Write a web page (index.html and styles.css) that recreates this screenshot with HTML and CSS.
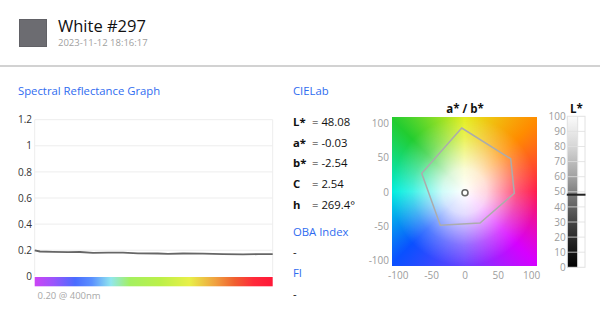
FILE: index.html
```html
<!DOCTYPE html>
<html>

<head>
  <link rel="stylesheet" href="styles.css">
</head>

<body>
  <header class="sample-header">
    <div class="swatch"></div>
    <div class="sample-info">
      <div class="sample-name">White #297</div>
      <div class="sample-date">2023-11-12 18:16:17</div>
    </div>
  </header>

  <main class="measurement">
    <!-- Spectral curve -->
    <section class="graph-col">
      <h2 class="section-title">Spectral Reflectance Graph</h2>
      <svg class="reflectance-graph" width="257" height="200" viewBox="0 0 257 200">
        <defs>
          <linearGradient id="spectrum" x1="0" y1="0" x2="1" y2="0">
            <stop offset="0%" stop-color="#cc44f5" />
            <stop offset="8%" stop-color="#9a55fc" />
            <stop offset="17%" stop-color="#4a6cff" />
            <stop offset="24%" stop-color="#5a90ff" />
            <stop offset="32%" stop-color="#90e6ee" />
            <stop offset="40%" stop-color="#a4f060" />
            <stop offset="53%" stop-color="#bcf048" />
            <stop offset="65%" stop-color="#e8f048" />
            <stop offset="76%" stop-color="#f0a040" />
            <stop offset="84%" stop-color="#f06030" />
            <stop offset="92%" stop-color="#ff2a3a" />
            <stop offset="100%" stop-color="#ff1838" />
          </linearGradient>
        </defs>
        <g class="grid">
          <line x1="16.7" y1="12.7" x2="254.7" y2="12.7" />
          <line x1="16.7" y1="38.8" x2="254.7" y2="38.8" />
          <line x1="16.7" y1="64.9" x2="254.7" y2="64.9" />
          <line x1="16.7" y1="91" x2="254.7" y2="91" />
          <line x1="16.7" y1="117.1" x2="254.7" y2="117.1" />
          <line x1="16.7" y1="143.2" x2="254.7" y2="143.2" />
          <line x1="16.7" y1="12.7" x2="16.7" y2="169.3" />
          <line x1="254.7" y1="12.7" x2="254.7" y2="169.3" />
        </g>
        <g class="y-labels">
          <text x="14" y="16.3">1.2</text>
          <text x="14" y="42.4">1</text>
          <text x="14" y="68.5">0.8</text>
          <text x="14" y="94.6">0.6</text>
          <text x="14" y="120.7">0.4</text>
          <text x="14" y="146.8">0.2</text>
          <text x="14" y="172.9">0</text>
        </g>
        <polyline class="curve" points="16.7,143.3 22,144.5 35,144.8 50,145.2 62,145 75,145.8 90,145.6 105,145.7 120,146.3 140,146.5 150,146.8 165,146.5 185,146.7 205,147.1 225,147.3 240,147.2 254.7,147.2" />
        <rect x="16.7" y="170" width="238" height="9.3" fill="url(#spectrum)" />
        <text class="peak-note" x="19.5" y="192">0.20 @ 400nm</text>
      </svg>
    </section>

    <!-- Numeric values -->
    <section class="lab-col">
      <h2 class="section-title">CIELab</h2>
      <dl class="lab-values">
        <div class="lab-row"><dt>L*</dt><dd>= 48.08</dd></div>
        <div class="lab-row"><dt>a*</dt><dd>= -0.03</dd></div>
        <div class="lab-row"><dt>b*</dt><dd>= -2.54</dd></div>
        <div class="lab-row"><dt>C</dt><dd>= 2.54</dd></div>
        <div class="lab-row"><dt>h</dt><dd>= 269.4°</dd></div>
      </dl>
      <h2 class="section-title oba-title">OBA Index</h2>
      <p class="empty-value">-</p>
      <h2 class="section-title fi-title">FI</h2>
      <p class="empty-value fi-value">-</p>
    </section>

    <!-- a*/b* plane and L* scale -->
    <section class="chart-col">
      <div class="ab-chart">
        <div class="ab-plane"></div>
        <svg class="chart-overlay" width="240" height="190" viewBox="0 0 240 190">
          <defs>
            <linearGradient id="lightness" x1="0" y1="0" x2="0" y2="1">
              <stop offset="0%" stop-color="#fbfbfb" />
              <stop offset="20%" stop-color="#d6d6d6" />
              <stop offset="40%" stop-color="#a2a2a2" />
              <stop offset="55%" stop-color="#707070" />
              <stop offset="70%" stop-color="#444" />
              <stop offset="85%" stop-color="#1e1e1e" />
              <stop offset="100%" stop-color="#000" />
            </linearGradient>
          </defs>

          <text class="chart-title" x="105" y="16">a* / b*</text>
          <g class="axis-label end">
            <text x="29" y="29.9">100</text>
            <text x="29" y="64.2">50</text>
            <text x="29" y="98.5">0</text>
            <text x="29" y="132.8">-50</text>
            <text x="29" y="167.1">-100</text>
          </g>
          <g class="axis-label middle">
            <text x="38.3" y="182.3">-100</text>
            <text x="71.7" y="182.3">-50</text>
            <text x="105" y="182.3">0</text>
            <text x="138.3" y="182.3">50</text>
            <text x="171.7" y="182.3">100</text>
          </g>
          <polygon class="gamut" points="101.7,31 150.7,61.7 154.3,96.3 120,126 80.3,128.3 61.7,76.3" />
          <circle class="sample-point" cx="105" cy="95.8" r="3" />

          <text class="chart-title" x="216.5" y="16">L*</text>
          <g class="axis-label end">
            <text x="205.7" y="22.9">100</text>
            <text x="205.7" y="38">90</text>
            <text x="205.7" y="53.1">80</text>
            <text x="205.7" y="68.2">70</text>
            <text x="205.7" y="83.3">60</text>
            <text x="205.7" y="98.4">50</text>
            <text x="205.7" y="113.5">40</text>
            <text x="205.7" y="128.6">30</text>
            <text x="205.7" y="143.7">20</text>
            <text x="205.7" y="158.8">10</text>
            <text x="205.7" y="173.9">0</text>
          </g>
          <rect x="207.3" y="19.3" width="10.4" height="151" fill="url(#lightness)" />
          <rect class="l-frame" x="207.3" y="19.3" width="17.7" height="151" />
          <line class="l-frame" x1="217.7" y1="19.3" x2="217.7" y2="170.3" />
          <g class="l-ticks">
            <line x1="207.3" y1="34.4" x2="225" y2="34.4" />
            <line x1="207.3" y1="49.5" x2="225" y2="49.5" />
            <line x1="207.3" y1="64.6" x2="225" y2="64.6" />
            <line x1="207.3" y1="79.7" x2="225" y2="79.7" />
            <line x1="207.3" y1="94.8" x2="225" y2="94.8" />
            <line x1="207.3" y1="109.9" x2="225" y2="109.9" />
            <line x1="207.3" y1="125" x2="225" y2="125" />
            <line x1="207.3" y1="140.1" x2="225" y2="140.1" />
            <line x1="207.3" y1="155.2" x2="225" y2="155.2" />
          </g>
          <line class="l-marker" x1="206.8" y1="97.7" x2="225.5" y2="97.7" />
        </svg>
      </div>
    </section>
  </main>
</body>

</html>
```

FILE: styles.css
```css
/* Page */
body {
  margin: 0;
  width: 600px;
  height: 314px;
  overflow: hidden;
  background: #fff;
  color: #111;
  font-family: "Open Sans", "Noto Sans", sans-serif;
}

/* Sample header */
.sample-header {
  display: flex;
  align-items: flex-start;
  gap: 11px;
  height: 67px;
  box-sizing: border-box;
  padding: 19px 0 0 19px;
  border-bottom: 2px solid #d2d2d2;
}

.swatch {
  width: 28px;
  height: 28px;
  box-sizing: border-box;
  background-color: #6c6c71;
  border: 1px solid #616166;
}

.sample-info {
  margin-top: -3px;
}

.sample-name {
  font-size: 16.5px;
  line-height: 19px;
}

.sample-date {
  margin-top: 1px;
  font-size: 9.5px;
  line-height: 13px;
  color: #a0a0a0;
}

/* Measurement area */
.measurement {
  display: flex;
  padding: 16.3px 0 0 18px;
}

.section-title {
  margin: 0;
  font-size: 11.3px;
  line-height: 16px;
  font-weight: 400;
  color: #2f6cf0;
}

.graph-col {
  width: 257px;
  margin-right: 18px;
}

.reflectance-graph {
  display: block;
  margin-top: 7.5px;
}

.reflectance-graph .grid line {
  stroke: #ededed;
  stroke-width: 1;
}

.reflectance-graph .y-labels text {
  font-size: 10px;
  fill: #333;
  text-anchor: end;
}

.reflectance-graph .curve {
  fill: none;
  stroke: #666;
  stroke-width: 1.8;
  stroke-linejoin: round;
}

.reflectance-graph .peak-note {
  font-size: 9.5px;
  fill: #a8a8a8;
}

/* CIELab values */
.lab-col {
  width: 67px;
}

.lab-values {
  margin: 13px 0 0 0;
}

.lab-row {
  display: flex;
  font-size: 11.3px;
  line-height: 20.6px;
}

.lab-row dt {
  width: 19px;
  font-weight: 700;
}

.lab-row dd {
  margin: 0;
  white-space: nowrap;
}

.oba-title {
  margin-top: 8.3px;
}

.empty-value {
  margin: 4px 0 0 0;
  font-size: 11.3px;
  line-height: 16px;
}

.fi-title {
  margin-top: 5px;
}

.fi-value {
  margin-top: 5px;
}

/* a*/b* chart */
.chart-col {
  width: 240px;
}

.ab-chart {
  position: relative;
  width: 240px;
  height: 190px;
  margin-top: 14px;
  box-sizing: border-box;
  padding: 19.7px 0 0 31.7px;
}

.ab-plane {
  width: 145.6px;
  height: 149px;
  background:
    radial-gradient(closest-side, #fff 0%, rgba(255, 255, 255, 0.82) 30%, rgba(255, 255, 255, 0.25) 72%, rgba(255, 255, 255, 0) 100%),
    conic-gradient(#e4ee1e 0deg, #ff8c00 45deg, #ff1c4c 90deg, #d600ff 135deg, #6a40ff 180deg,
      #0a50ff 225deg, #00eede 270deg, #22cc30 315deg, #e4ee1e 360deg);
}

.chart-overlay {
  position: absolute;
  top: 0;
  left: 0;
  overflow: visible;
}

.chart-overlay .chart-title {
  font-size: 11.5px;
  font-weight: 700;
  fill: #111;
  text-anchor: middle;
}

.chart-overlay .axis-label text {
  font-size: 10px;
  fill: #9c9c9c;
}

.chart-overlay .axis-label.end text {
  text-anchor: end;
}

.chart-overlay .axis-label.middle text {
  text-anchor: middle;
}

.chart-overlay .gamut {
  fill: none;
  stroke: #acacac;
  stroke-width: 1.5;
}

.chart-overlay .sample-point {
  fill: #fff;
  stroke: #666;
  stroke-width: 1.6;
}

/* L* scale */
.chart-overlay .l-frame {
  fill: none;
  stroke: #e2e2e2;
  stroke-width: 1;
}

.chart-overlay .l-ticks line {
  stroke: #e0e0e0;
  stroke-width: 1;
  opacity: 0.8;
}

.chart-overlay .l-marker {
  stroke: #222;
  stroke-width: 2;
}
```
